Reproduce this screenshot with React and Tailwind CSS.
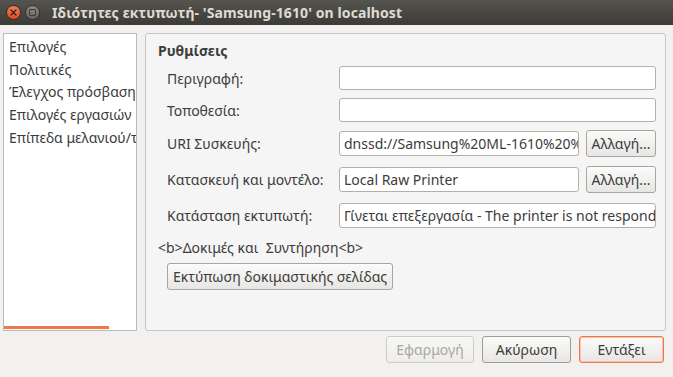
export default function App() {
  const font = { fontFamily: '"Noto Sans", "Open Sans", sans-serif' }
  const sections = ['Επιλογές', 'Πολιτικές', 'Έλεγχος πρόσβασης', 'Επιλογές εργασιών', 'Επίπεδα μελανιού/τόνερ']

  return (
    <div className="w-[673px] h-[377px] flex flex-col bg-[#f2f1f0] text-[14px] text-[#3c3c3c] overflow-hidden" style={font}>
      {/* Title bar */}
      <div className="h-[25px] shrink-0 flex items-center bg-gradient-to-b from-[#55544f] to-[#3c3b37] pl-[6px]">
        <div className="w-[15px] h-[15px] rounded-full bg-gradient-to-b from-[#f57f55] to-[#df4a1c] flex items-center justify-center border border-[#3a2a22]">
          <svg width="7" height="7" viewBox="0 0 7 7">
            <path d="M1 1L6 6M6 1L1 6" stroke="#3b2017" strokeWidth="1.3" strokeLinecap="round" />
          </svg>
        </div>
        <div className="ml-[4px] w-[15px] h-[15px] rounded-full bg-gradient-to-b from-[#8a8984] to-[#66655f] flex items-center justify-center border border-[#33322e]">
          <div className="w-[7px] h-[7px] border border-[#3c3b37] rounded-[1px]" />
        </div>
        <span className="ml-[12px] text-[14px] font-bold text-[#dfdbd2] tracking-[0.1px] whitespace-nowrap">
          Ιδιότητες εκτυπωτή- 'Samsung-1610' on localhost
        </span>
      </div>

      {/* Content */}
      <div className="flex flex-1 pt-[8px] pl-[3px] pr-[7px] gap-[8px]">
        {/* Section list */}
        <div className="w-[135px] h-[298px] bg-white border border-[#bdbbb8] flex flex-col justify-between overflow-hidden">
          <div className="pt-[2px] pl-[5px] flex flex-col">
            {sections.map((s) => (
              <div key={s} className="h-[22.7px] leading-[22.7px] whitespace-nowrap">
                {s}
              </div>
            ))}
          </div>
          <div className="h-[3px] w-[105px] bg-[#f07746] mb-[1px]" />
        </div>

        {/* Settings panel */}
        <div className="w-[521px] h-[298px] bg-[#f5f5f5] border border-[#c8c6c3] rounded-[3px] pt-[7px] pl-[12px] pr-[9px]">
          <div className="font-bold leading-[19px]">Ρυθμίσεις</div>
          <div className="pl-[9px]">
            <div className="mt-[6px] flex items-center h-[24px]">
              <span className="w-[172px]">Περιγραφή:</span>
              <div className="flex-1 h-[24px] bg-white border border-[#b3afa9] rounded-[3px]" />
            </div>
            <div className="mt-[8px] flex items-center h-[24px]">
              <span className="w-[172px]">Τοποθεσία:</span>
              <div className="flex-1 h-[24px] bg-white border border-[#b3afa9] rounded-[3px]" />
            </div>
            <div className="mt-[8px] flex items-center h-[27px]">
              <span className="w-[172px]">URI Συσκευής:</span>
              <div className="w-[240px] h-[25px] bg-white border border-[#b3afa9] rounded-[3px] pl-[4px] leading-[23px] overflow-hidden whitespace-nowrap">
                dnssd://Samsung%20ML-1610%20%40%20localhost._printer._tcp.local/
              </div>
              <button className="ml-[7px] w-[70px] h-[27px] border border-[#aaa69f] rounded-[3px] bg-gradient-to-b from-[#fbfbfa] to-[#e7e6e4] whitespace-nowrap overflow-hidden">
                Αλλαγή...
              </button>
            </div>
            <div className="mt-[9px] flex items-center h-[27px]">
              <span className="w-[172px]">Κατασκευή και μοντέλο:</span>
              <div className="w-[240px] h-[25px] bg-white border border-[#b3afa9] rounded-[3px] pl-[4px] leading-[23px] overflow-hidden whitespace-nowrap">
                Local Raw Printer
              </div>
              <button className="ml-[7px] w-[70px] h-[27px] border border-[#aaa69f] rounded-[3px] bg-gradient-to-b from-[#fbfbfa] to-[#e7e6e4] whitespace-nowrap overflow-hidden">
                Αλλαγή...
              </button>
            </div>
            <div className="mt-[10px] flex items-center h-[25px]">
              <span className="w-[172px] shrink-0">Κατάσταση εκτυπωτή:</span>
              <div className="flex-1 min-w-0 h-[25px] bg-white border border-[#b3afa9] rounded-[3px] pl-[4px] leading-[23px] overflow-hidden whitespace-nowrap">
                Γίνεται επεξεργασία - The printer is not responding.
              </div>
            </div>
          </div>
          <div className="mt-[10px] leading-[19px]">&lt;b&gt;Δοκιμές και&nbsp; Συντήρηση&lt;b&gt;</div>
          <div className="pl-[9px] mt-[6px]">
            <button className="h-[27px] px-[5px] border border-[#aaa69f] rounded-[3px] bg-gradient-to-b from-[#fbfbfa] to-[#e7e6e4] whitespace-nowrap">
              Εκτύπωση δοκιμαστικής σελίδας
            </button>
          </div>
        </div>
      </div>

      {/* Dialog buttons */}
      <div className="h-[46px] shrink-0 flex items-start justify-end gap-[8px] pr-[9px] pt-[5px]">
        <button className="w-[88px] h-[27px] border border-[#cfccc8] rounded-[3px] bg-gradient-to-b from-[#f7f7f6] to-[#eeedeb] text-[#a9a7a3]">
          Εφαρμογή
        </button>
        <button className="w-[89px] h-[27px] border border-[#a09c96] rounded-[3px] bg-gradient-to-b from-[#fbfbfa] to-[#e7e6e4]">
          Ακύρωση
        </button>
        <button className="w-[85px] h-[27px] border border-[#f07746] rounded-[3px] bg-gradient-to-b from-[#fbfbfa] to-[#e7e6e4] shadow-[inset_0_0_0_1px_#f6c3ae]">
          Εντάξει
        </button>
      </div>
    </div>
  )
}
